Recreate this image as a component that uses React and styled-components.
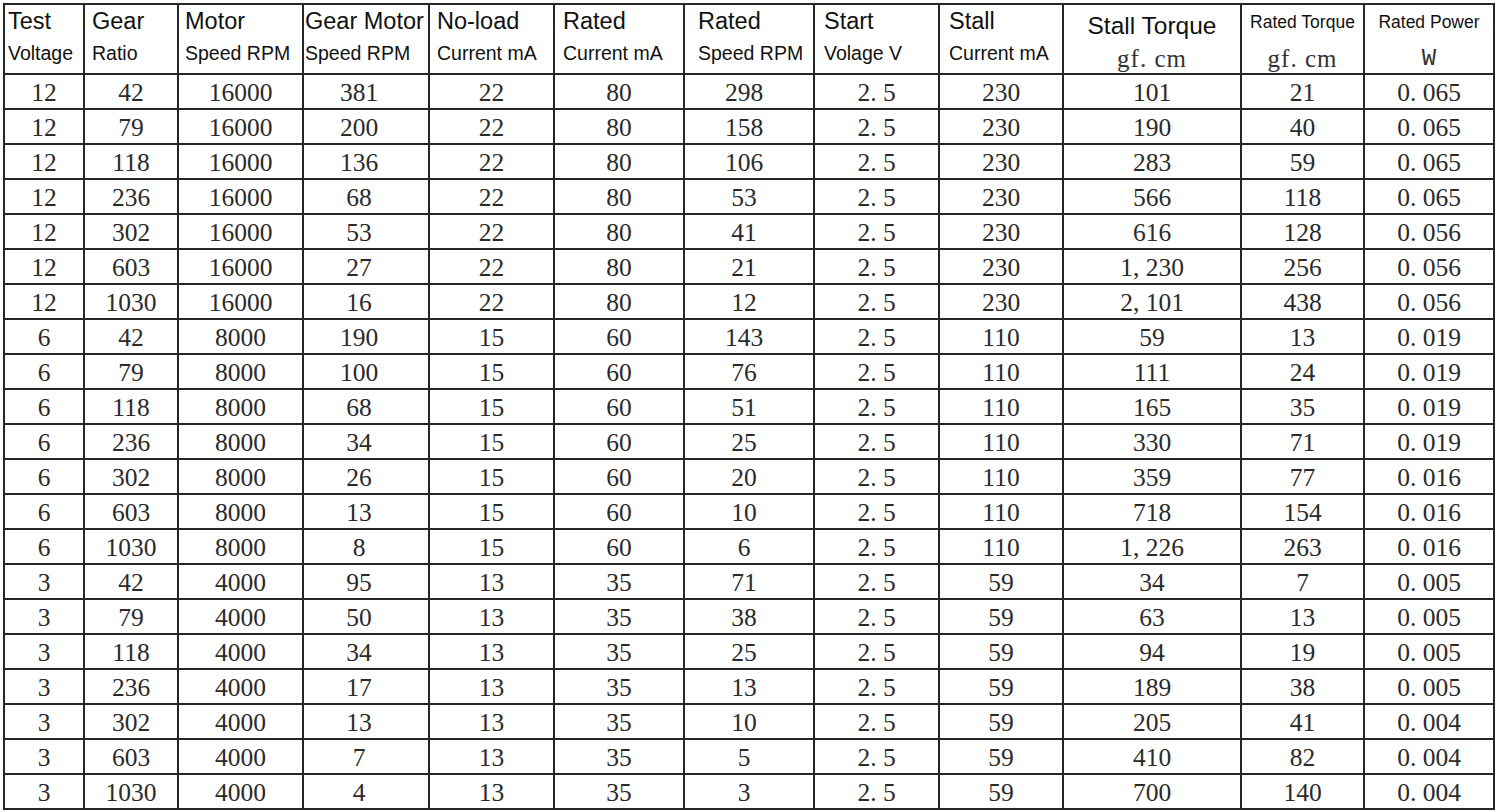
import React from "react";
import styled, { createGlobalStyle } from "styled-components";

const GlobalStyle = createGlobalStyle`
  html, body {
    margin: 0;
    padding: 0;
    background: #fff;
  }
`;

const Page = styled.div`
  padding: 3px 0 0 3px;
  width: 1500px;
  height: 812px;
  box-sizing: border-box;
  overflow: hidden;
`;

const Table = styled.table`
  border-collapse: collapse;
  table-layout: fixed;
  width: 1490px;
  border: 2px solid #262626;
  color: #2a2a2a;
`;

const HeadRow = styled.tr`
  height: 70px;
`;

const Row = styled.tr`
  height: 35px;
`;

const HeadCell = styled.th`
  border: 2px solid #262626;
  height: 66px;
  box-sizing: border-box;
  padding: ${p => p.$pt || 0}px 0 0 ${p => p.$pl || 0}px;
  vertical-align: top;
  text-align: ${p => (p.$center ? "center" : "left")};
  font-weight: normal;
  color: #111;
  white-space: nowrap;
  overflow: hidden;
`;

const HeadTop = styled.div`
  font-family: "Liberation Sans", Arial, sans-serif;
  font-size: ${p => p.$size}px;
  line-height: ${p => p.$lh}px;
`;

const HeadSub = styled.div`
  font-family: "Liberation Sans", Arial, sans-serif;
  font-size: 19.5px;
  line-height: 30px;
  margin-top: 2px;
`;

const Unit = styled.div`
  font-family: ${p => (p.$mono ? '"Liberation Mono", monospace' : '"Liberation Serif", serif')};
  font-size: ${p => (p.$mono ? 24 : 25)}px;
  letter-spacing: ${p => (p.$mono ? 0 : 1)}px;
  line-height: 28px;
  margin-top: ${p => p.$mt}px;
  color: #333;
`;

const Cell = styled.td`
  border: 2px solid #262626;
  padding: 4px ${p => p.$pr || 0}px 0 0;
  text-align: center;
  vertical-align: top;
  font-family: "Liberation Serif", "Times New Roman", serif;
  font-size: 25.5px;
  line-height: 28px;
  white-space: nowrap;
`;

const columns = [
  { w: 80, top: "Test", sub: "Voltage", pl: 3 },
  { w: 94, top: "Gear", sub: "Ratio", pl: 7 },
  { w: 125, top: "Motor", sub: "Speed RPM", pl: 6 },
  { w: 126, top: "Gear Motor", sub: "Speed RPM", pl: 1, pr: 14 },
  { w: 125, top: "No-load", sub: "Current mA", pl: 7 },
  { w: 130, top: "Rated", sub: "Current mA", pl: 8 },
  { w: 130, top: "Rated", sub: "Speed RPM", pl: 13, pr: 10 },
  { w: 125, top: "Start", sub: "Volage V", pl: 9 },
  { w: 124, top: "Stall", sub: "Current mA", pl: 9 },
  { w: 178, top: "Stall Torque", unit: "gf. cm", size: 24.5, lh: 38, pt: 2, mt: 0 },
  { w: 123, top: "Rated Torque", unit: "gf. cm", size: 17.5, lh: 30, pt: 2, mt: 8 },
  { w: 130, top: "Rated Power", unit: "W", mono: true, size: 17.5, lh: 30, pt: 2, mt: 8 },
];

const rows = [
  ["12", "42", "16000", "381", "22", "80", "298", "2. 5", "230", "101", "21", "0. 065"],
  ["12", "79", "16000", "200", "22", "80", "158", "2. 5", "230", "190", "40", "0. 065"],
  ["12", "118", "16000", "136", "22", "80", "106", "2. 5", "230", "283", "59", "0. 065"],
  ["12", "236", "16000", "68", "22", "80", "53", "2. 5", "230", "566", "118", "0. 065"],
  ["12", "302", "16000", "53", "22", "80", "41", "2. 5", "230", "616", "128", "0. 056"],
  ["12", "603", "16000", "27", "22", "80", "21", "2. 5", "230", "1, 230", "256", "0. 056"],
  ["12", "1030", "16000", "16", "22", "80", "12", "2. 5", "230", "2, 101", "438", "0. 056"],
  ["6", "42", "8000", "190", "15", "60", "143", "2. 5", "110", "59", "13", "0. 019"],
  ["6", "79", "8000", "100", "15", "60", "76", "2. 5", "110", "111", "24", "0. 019"],
  ["6", "118", "8000", "68", "15", "60", "51", "2. 5", "110", "165", "35", "0. 019"],
  ["6", "236", "8000", "34", "15", "60", "25", "2. 5", "110", "330", "71", "0. 019"],
  ["6", "302", "8000", "26", "15", "60", "20", "2. 5", "110", "359", "77", "0. 016"],
  ["6", "603", "8000", "13", "15", "60", "10", "2. 5", "110", "718", "154", "0. 016"],
  ["6", "1030", "8000", "8", "15", "60", "6", "2. 5", "110", "1, 226", "263", "0. 016"],
  ["3", "42", "4000", "95", "13", "35", "71", "2. 5", "59", "34", "7", "0. 005"],
  ["3", "79", "4000", "50", "13", "35", "38", "2. 5", "59", "63", "13", "0. 005"],
  ["3", "118", "4000", "34", "13", "35", "25", "2. 5", "59", "94", "19", "0. 005"],
  ["3", "236", "4000", "17", "13", "35", "13", "2. 5", "59", "189", "38", "0. 005"],
  ["3", "302", "4000", "13", "13", "35", "10", "2. 5", "59", "205", "41", "0. 004"],
  ["3", "603", "4000", "7", "13", "35", "5", "2. 5", "59", "410", "82", "0. 004"],
  ["3", "1030", "4000", "4", "13", "35", "3", "2. 5", "59", "700", "140", "0. 004"],
];

export default function App() {
  return (
    <>
      <GlobalStyle />
      <Page>
        <Table>
          <colgroup>
            {columns.map((c, i) => (
              <col key={i} style={{ width: c.w }} />
            ))}
          </colgroup>
          <thead>
            <HeadRow>
              {columns.map((c, i) =>
                c.unit ? (
                  <HeadCell key={i} $center $pt={c.pt}>
                    <HeadTop $size={c.size} $lh={c.lh}>{c.top}</HeadTop>
                    <Unit $mono={c.mono} $mt={c.mt}>{c.unit}</Unit>
                  </HeadCell>
                ) : (
                  <HeadCell key={i} $pl={c.pl} $pt={1}>
                    <HeadTop $size={23.5} $lh={30}>{c.top}</HeadTop>
                    <HeadSub>{c.sub}</HeadSub>
                  </HeadCell>
                )
              )}
            </HeadRow>
          </thead>
          <tbody>
            {rows.map((r, i) => (
              <Row key={i}>
                {r.map((v, j) => (
                  <Cell key={j} $pr={columns[j].pr}>{v}</Cell>
                ))}
              </Row>
            ))}
          </tbody>
        </Table>
      </Page>
    </>
  );
}
